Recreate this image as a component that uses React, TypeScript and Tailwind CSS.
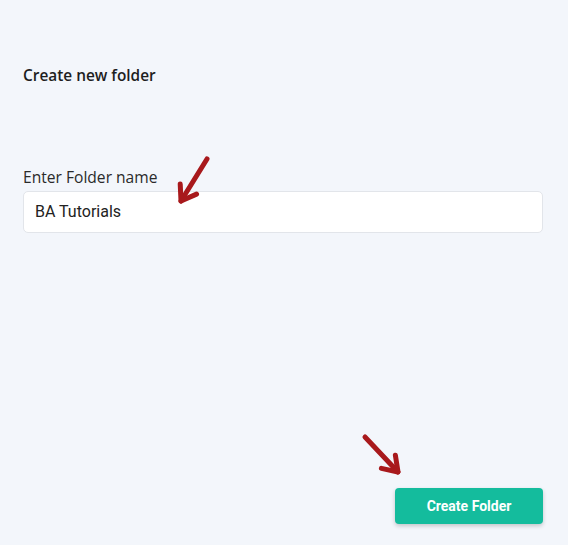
import React from "react";

function Arrow({ x1, y1, x2, y2 }: { x1: number; y1: number; x2: number; y2: number }) {
  const ang = Math.atan2(y2 - y1, x2 - x1);
  const L = 17;
  const spread = 0.6;
  const a1x = x2 - L * Math.cos(ang - spread);
  const a1y = y2 - L * Math.sin(ang - spread);
  const a2x = x2 - L * Math.cos(ang + spread);
  const a2y = y2 - L * Math.sin(ang + spread);
  return (
    <g stroke="#a8191c" strokeWidth={5} strokeLinecap="round" strokeLinejoin="round" fill="none">
      <line x1={x1} y1={y1} x2={x2} y2={y2} />
      <polyline points={`${a1x},${a1y} ${x2},${y2} ${a2x},${a2y}`} />
    </g>
  );
}

export default function App() {
  return (
    <div className="relative w-[568px] h-[545px] bg-[#f3f6fb] overflow-hidden" style={{ fontFamily: "Roboto, 'Liberation Sans', sans-serif" }}>
      <div className="flex flex-col h-full px-[23px] pt-[66px] pb-[21px]">
        <h1 className="text-[15.4px] font-semibold text-[#1e1e1e] leading-[20px]" style={{ fontFamily: "'Open Sans', 'Noto Sans', sans-serif" }}>
          Create new folder
        </h1>
        <label className="mt-[81px] text-[15.6px] text-[#2a2a2a] leading-[20px]" style={{ fontFamily: "'Open Sans', 'Noto Sans', sans-serif" }}>
          Enter Folder name
        </label>
        <div className="mt-[4px] w-[520px] h-[42px] bg-white border border-[#e2e5ea] rounded-[5px] flex items-center px-[11px]">
          <span className="text-[16px] text-[#222]">BA Tutorials</span>
        </div>
        <div className="flex-1" />
        <div className="flex justify-end pr-[2px]">
          <button className="w-[148px] h-[36px] rounded-[4px] bg-[#14bc9d] text-white text-[14px] font-bold shadow-[0_2px_4px_rgba(0,0,0,0.2)]">
            Create Folder
          </button>
        </div>
      </div>
      <svg className="absolute inset-0 pointer-events-none" width={568} height={545}>
        <Arrow x1={207} y1={159} x2={181} y2={201} />
        <Arrow x1={365} y1={437} x2={398} y2={472} />
      </svg>
    </div>
  );
}
